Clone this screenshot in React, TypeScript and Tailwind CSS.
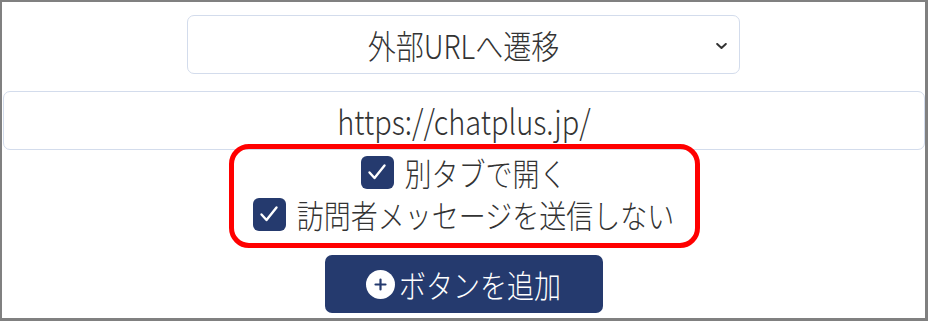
import React from 'react';

const font = { fontFamily: '"Noto Sans CJK JP", "Noto Sans", sans-serif' };

const CheckBox: React.FC = () => (
  <span className="flex h-[33px] w-[33px] shrink-0 items-center justify-center rounded-[6px] bg-[#253a6e]">
    <svg width="22" height="20" viewBox="0 0 22 20" fill="none">
      <path d="M3.5 10.5l5 5.5L18.5 3.5" stroke="#fff" strokeWidth="2.4" strokeLinecap="round" strokeLinejoin="round" />
    </svg>
  </span>
);

const CheckRow: React.FC<{ label: string }> = ({ label }) => (
  <label className="flex h-[42px] items-center gap-[11px]">
    <CheckBox />
    <span className="inline-block scale-y-[1.18] text-[27px] leading-none font-light text-[#333]">{label}</span>
  </label>
);

const App: React.FC = () => {
  return (
    <div
      className="relative box-border flex h-[321px] w-[928px] flex-col items-center border-t-2 border-r-[3px] border-b-[3px] border-l-2 border-[#808080] bg-white"
      style={font}
    >
      {/* Action select */}
      <div className="relative mt-[13px] flex h-[59px] w-[553px] shrink-0 items-center justify-center rounded-[7px] border border-[#d3dcec] bg-white">
        <span className="inline-block scale-y-[1.18] text-[28px] leading-none font-light text-[#333]">外部URLへ遷移</span>
        <svg className="absolute right-[12px] top-[27px]" width="11" height="6" viewBox="0 0 11 6" fill="none">
          <path d="M1.2 1l4.3 4 4.3-4" stroke="#333" strokeWidth="2" strokeLinecap="round" strokeLinejoin="round" />
        </svg>
      </div>

      {/* URL input */}
      <div className="mt-[17px] ml-px flex h-[59px] w-[922px] shrink-0 items-center justify-center rounded-[7px] border border-[#d3dcec] bg-white">
        <span className="inline-block scale-y-[1.18] text-[29px] leading-none font-light text-[#333]">https://chatplus.jp/</span>
      </div>

      {/* Options */}
      <div className="mt-px flex flex-col items-center">
        <CheckRow label="別タブで開く" />
        <CheckRow label="訪問者メッセージを送信しない" />
      </div>

      {/* Add button */}
      <button className="mt-[20px] flex h-[58px] w-[278px] shrink-0 items-center justify-center gap-[4px] rounded-[7px] bg-[#253a6e] text-white">
        <span className="flex h-[29px] w-[29px] items-center justify-center rounded-full bg-white">
          <svg width="13" height="13" viewBox="0 0 13 13">
            <path d="M6.5 1.5v10M1.5 6.5h10" stroke="#253a6e" strokeWidth="2.2" strokeLinecap="round" />
          </svg>
        </span>
        <span className="inline-block scale-y-[1.18] text-[27px] leading-none font-light">ボタンを追加</span>
      </button>

      {/* Annotation highlight */}
      <div className="pointer-events-none absolute left-[227px] top-[142px] h-[104px] w-[471px] rounded-[20px] border-[5px] border-[#ff0000]" />
    </div>
  );
};

export default App;
